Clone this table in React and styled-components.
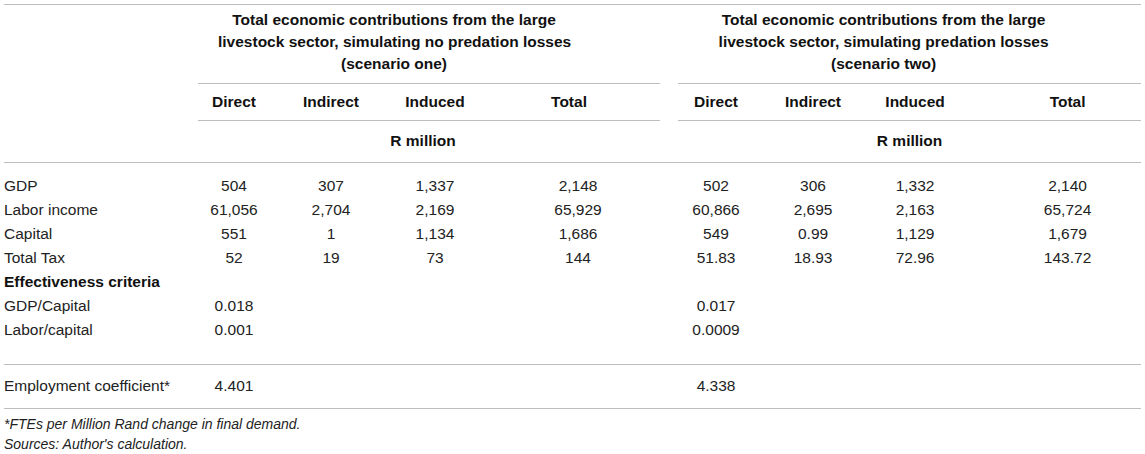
import React from 'react';
import styled, { createGlobalStyle } from 'styled-components';

const Global = createGlobalStyle`
  html, body { margin: 0; padding: 0; background: #ffffff; }
  body {
    font-family: "Liberation Sans", Arial, Helvetica, sans-serif;
    color: #222222;
  }
`;

const LINE = '#bdbdbd';

const Page = styled.div`
  padding: 4px 4px 0 4px;
  width: 1137px;
`;

const Table = styled.table`
  width: 1137px;
  border-collapse: collapse;
  table-layout: fixed;
  font-size: 15.5px;
  border-top: 1px solid ${LINE};
`;

const EmptyHead = styled.th`
  padding: 0;
`;

const GroupCell = styled.th`
  padding: 0;
  vertical-align: bottom;
`;

const GroupLine = styled.div`
  border-bottom: 1px solid ${LINE};
  margin-right: ${(p) => (p.$gap ? '18px' : '0')};
`;

const Title = styled.div`
  padding: 4px ${(p) => p.$pr}px 8px ${(p) => p.$pl}px;
  font-weight: 700;
  color: #111;
  line-height: 22px;
  text-align: center;
  white-space: nowrap;
`;

const ColHead = styled.th`
  padding: 0;
  font-weight: 700;
  color: #111;
`;

const ColHeadInner = styled.div`
  border-bottom: 1px solid ${LINE};
  margin-right: ${(p) => (p.$gap ? '18px' : '0')};
  padding: 7px 0 7px ${(p) => (p.$shift ? p.$shift : 0)}px;
  line-height: 22px;
  text-align: center;
`;

const UnitRow = styled.tr`
  border-bottom: 1px solid ${LINE};
`;

const UnitCell = styled.th`
  padding: 9px ${(p) => p.$pr || 0}px 10px 0;
  line-height: 22px;
  font-weight: 700;
  color: #111;
  text-align: center;
`;

const Row = styled.tr`
  border-bottom: ${(p) => (p.$rule ? `1px solid ${LINE}` : 'none')};
`;

const Label = styled.td`
  padding: ${(p) => p.$pt || 0}px 0 ${(p) => p.$pb || 0}px 0;
  line-height: ${(p) => p.$lh || 24}px;
  text-align: left;
  white-space: nowrap;
  font-weight: ${(p) => (p.$bold ? 700 : 400)};
  color: ${(p) => (p.$bold ? '#111' : '#222')};
`;

const Cell = styled.td`
  padding: ${(p) => p.$pt || 0}px 0 ${(p) => p.$pb || 0}px ${(p) => p.$shift || 0}px;
  line-height: ${(p) => p.$lh || 24}px;
  text-align: center;
  white-space: nowrap;
`;

const Notes = styled.div`
  padding-top: 5px;
  font-size: 14px;
  font-style: italic;
  line-height: 20px;
  color: #222;
`;

const COLS = [194, 72, 122, 86, 200, 76, 118, 86, 183];
const SHIFT = [0, 0, 0, 0, 0, 0, 0, 36];
const HEADS = ['Direct', 'Indirect', 'Induced', 'Total', 'Direct', 'Indirect', 'Induced', 'Total'];

const DATA = [
  ['GDP', '504', '307', '1,337', '2,148', '502', '306', '1,332', '2,140'],
  ['Labor income', '61,056', '2,704', '2,169', '65,929', '60,866', '2,695', '2,163', '65,724'],
  ['Capital', '551', '1', '1,134', '1,686', '549', '0.99', '1,129', '1,679'],
  ['Total Tax', '52', '19', '73', '144', '51.83', '18.93', '72.96', '143.72'],
  ['Effectiveness criteria', '', '', '', '', '', '', '', '', true],
  ['GDP/Capital', '0.018', '', '', '', '0.017', '', '', ''],
  ['Labor/capital', '0.001', '', '', '', '0.0009', '', '', ''],
];

export default function App() {
  return (
    <>
      <Global />
      <Page>
        <Table>
          <colgroup>
            {COLS.map((w, i) => (
              <col key={i} style={{ width: w }} />
            ))}
          </colgroup>
          <thead>
            <tr>
              <EmptyHead />
              <GroupCell colSpan={4}>
                <GroupLine $gap>
                  <Title $pl={20} $pr={90}>
                    Total economic contributions from the large
                    <br />
                    livestock sector, simulating no predation losses
                    <br />
                    (scenario one)
                  </Title>
                </GroupLine>
              </GroupCell>
              <GroupCell colSpan={4}>
                <GroupLine>
                  <Title $pl={20} $pr={72}>
                    Total economic contributions from the large
                    <br />
                    livestock sector, simulating predation losses
                    <br />
                    (scenario two)
                  </Title>
                </GroupLine>
              </GroupCell>
            </tr>
            <tr>
              <EmptyHead />
              {HEADS.map((h, i) => (
                <ColHead key={i}>
                  <ColHeadInner $gap={i === 3} $shift={SHIFT[i]}>
                    {h}
                  </ColHeadInner>
                </ColHead>
              ))}
            </tr>
            <UnitRow>
              <EmptyHead />
              <UnitCell colSpan={4} $pr={30}>
                R million
              </UnitCell>
              <UnitCell colSpan={4}>R million</UnitCell>
            </UnitRow>
          </thead>
          <tbody>
            {DATA.map((r, ri) => {
              const pt = ri === 0 ? 11 : 0;
              const pb = ri === DATA.length - 1 ? 22 : 0;
              return (
                <Row key={ri} $rule={ri === DATA.length - 1}>
                  <Label $pt={pt} $pb={pb} $bold={r[9] === true}>
                    {r[0]}
                  </Label>
                  {r.slice(1, 9).map((v, ci) => (
                    <Cell key={ci} $pt={pt} $pb={pb} $shift={SHIFT[ci]}>
                      {v}
                    </Cell>
                  ))}
                </Row>
              );
            })}
            <Row $rule>
              <Label $pt={9} $pb={10} $lh={24}>
                Employment coefficient*
              </Label>
              {['4.401', '', '', '', '4.338', '', '', ''].map((v, ci) => (
                <Cell key={ci} $pt={9} $pb={10} $lh={24} $shift={SHIFT[ci]}>
                  {v}
                </Cell>
              ))}
            </Row>
          </tbody>
        </Table>
        <Notes>
          <div>*FTEs per Million Rand change in final demand.</div>
          <div>Sources: Author's calculation.</div>
        </Notes>
      </Page>
    </>
  );
}
